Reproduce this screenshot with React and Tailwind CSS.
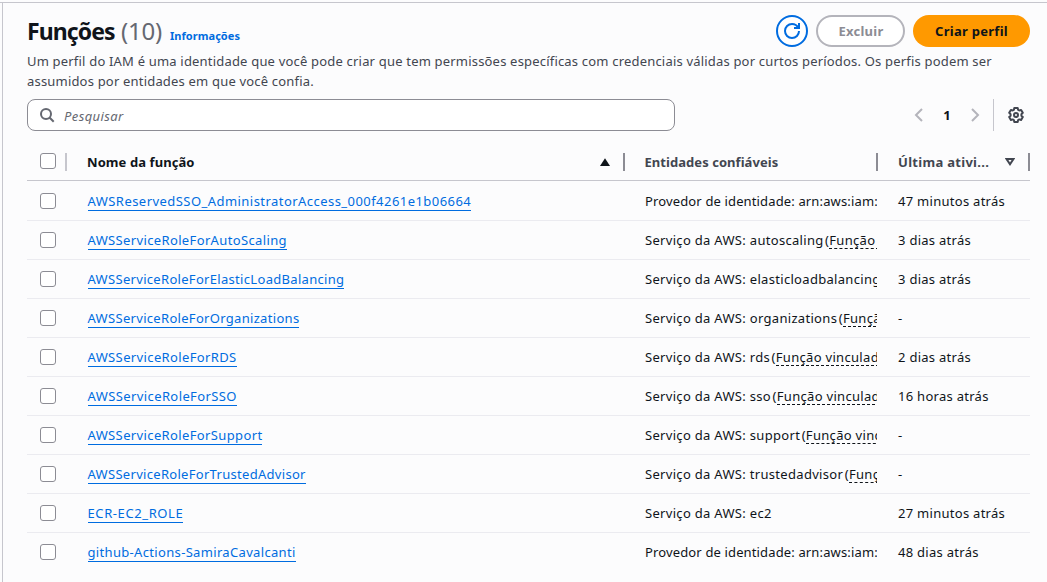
import React from "react";

const roles = [
  { name: "AWSReservedSSO_AdministratorAccess_000f4261e1b06664", track: "tracking-[0.45px]", entity: "Provedor de identidade: arn:aws:iam:", provider: true, activity: "47 minutos atrás" },
  { name: "AWSServiceRoleForAutoScaling", track: "tracking-[0.36px]", entity: "Serviço da AWS: autoscaling", linked: "Função ", activity: "3 dias atrás" },
  { name: "AWSServiceRoleForElasticLoadBalancing", track: "tracking-[0.31px]", entity: "Serviço da AWS: elasticloadbalancing", activity: "3 dias atrás" },
  { name: "AWSServiceRoleForOrganizations", track: "tracking-[0.31px]", entity: "Serviço da AWS: organizations", linked: "Funçã", activity: "-" },
  { name: "AWSServiceRoleForRDS", track: "tracking-[0.37px]", entity: "Serviço da AWS: rds", linked: "Função vinculad", activity: "2 dias atrás" },
  { name: "AWSServiceRoleForSSO", track: "tracking-[0.4px]", entity: "Serviço da AWS: sso", linked: "Função vinculad", activity: "16 horas atrás" },
  { name: "AWSServiceRoleForSupport", track: "tracking-[0.37px]", entity: "Serviço da AWS: support", linked: "Função vinc", activity: "-" },
  { name: "AWSServiceRoleForTrustedAdvisor", track: "tracking-[0.3px]", entity: "Serviço da AWS: trustedadvisor", linked: "Funç", activity: "-" },
  { name: "ECR-EC2_ROLE", track: "tracking-[0.6px]", entity: "Serviço da AWS: ec2", activity: "27 minutos atrás" },
  { name: "github-Actions-SamiraCavalcanti", track: "tracking-[0.33px]", entity: "Provedor de identidade: arn:aws:iam:", provider: true, activity: "48 dias atrás" },
];

function Checkbox() {
  return <span role="checkbox" aria-checked="false" className="block size-4 rounded-[3px] border border-[#8c8c94] bg-white" />;
}

function Header() {
  return (
    <header className="flex h-8 items-start justify-between">
      <div className="flex items-baseline whitespace-nowrap leading-8">
        <h1 className="w-[94px] text-[23px] font-bold tracking-[-0.9px] text-[#0f141a]">Funções</h1>
        <span className="w-[49px] text-[24px] tracking-[-0.2px] text-[#656871]">(10)</span>
        <a className="text-[11px] font-bold tracking-[0.05px] text-[#006ce0]">Informações</a>
      </div>
      <div className="flex gap-2">
        <button aria-label="Atualizar" className="flex size-8 items-center justify-center rounded-full border-2 border-[#006ce0] bg-white text-[#006ce0]">
          <svg viewBox="0 0 16 16" className="size-4" fill="none" stroke="currentColor" strokeWidth="2">
            <path d="M15 8c0 3.87-3.13 7-7 7s-7-3.13-7-7 3.13-7 7-7c2.79 0 5.2 1.63 6.33 4" />
            <path d="M10 5h5V0" />
          </svg>
        </button>
        <button className="h-8 w-[89px] rounded-full border-2 border-[#b4b4bb] bg-white pl-px pt-0.5 text-[13px] font-bold tracking-[0.25px] text-[#8c8c94]">Excluir</button>
        <button className="h-8 w-[117px] rounded-full bg-[#ff9900] pt-0.5 text-[13px] font-bold tracking-[0.28px] text-[#0f141a]">Criar perfil</button>
      </div>
    </header>
  );
}

function Toolbar() {
  return (
    <div className="mt-2 flex h-8 items-center justify-between">
      <div className="flex h-8 w-[648px] items-center rounded-lg border border-[#8c8c94] bg-white pl-[11px]">
        <svg viewBox="0 0 16 16" className="size-4" fill="none" stroke="#656871" strokeWidth="2">
          <circle cx="7" cy="7" r="5" />
          <path d="m10.500 10.500 4.200 4.200" />
        </svg>
        <span className="pl-[9px] pt-[3px] text-[13px] italic tracking-[0.4px] text-[#656871]">Pesquisar</span>
      </div>
      <div className="flex h-8 items-center pr-1.5">
        <svg viewBox="0 0 16 16" className="size-4" fill="none" stroke="#b4b4bb" strokeWidth="2"><path d="M11 2 5 8l6 6" /></svg>
        <span className="w-10 pt-px text-center text-[13px] font-bold text-[#0f141a]">1</span>
        <svg viewBox="0 0 16 16" className="size-4" fill="none" stroke="#b4b4bb" strokeWidth="2"><path d="m5 2 6 6-6 6" /></svg>
        <span className="ml-[10px] h-8 w-px bg-[#c6c6cd]" />
        <svg viewBox="0 0 16 16" className="ml-[14px] size-4" fill="none" stroke="#424650" strokeWidth="2" strokeLinejoin="round">
          <path d="M6.3 1h3.4l.4 1.8 1.2.7 1.8-.6 1.7 2.9L13.4 7.200v1.600l1.400 1.300-1.700 2.900-1.800-.6-1.200.7-.4 1.900H6.300l-.4-1.900-1.200-.7-1.800.6-1.700-2.900 1.400-1.300V7.200L1.200 5.800l1.700-2.900 1.800.6 1.200-.7z" />
          <circle cx="8" cy="8" r="2" />
        </svg>
      </div>
    </div>
  );
}

const columns = "grid grid-cols-[40px_558px_253px_152px]";

function TableHead() {
  return (
    <div className={`${columns} mt-[14px] h-9 border-b border-[#c6c6cd] pt-2 text-[13px] font-bold leading-[18px] text-[#424650]`}>
      <div className="flex h-[18px] justify-between pl-[13px]">
        <Checkbox />
        <span className="h-[18px] w-[2px] bg-[#c6c6cd]" />
      </div>
      <div className="flex h-[18px] items-center justify-between pl-5 text-[#0f141a]">
        <span className="tracking-[0.08px]">Nome da função</span>
        <span className="flex h-[18px] items-center gap-[13px]">
          <svg viewBox="0 0 10 8" className="h-2 w-[10px]" fill="#0f141a"><path d="M5 .2 10 8H0z" /></svg>
          <span className="h-[18px] w-[2px] bg-[#8c8c94]" />
        </span>
      </div>
      <div className="flex h-[18px] items-center justify-between pl-[19.5px]">
        <span className="tracking-[0.05px]">Entidades confiáveis</span>
        <span className="h-[18px] w-[2px] bg-[#8c8c94]" />
      </div>
      <div className="flex h-[18px] items-center justify-between pl-5">
        <span className="tracking-[0.3px]">Última ativi...</span>
        <span className="flex h-[18px] items-center gap-[13px]">
          <svg viewBox="0 0 10 8" className="h-2 w-[10px]" fill="none" stroke="#424650" strokeWidth="2"><path d="M1.600 1h6.800L5 6.200z" /></svg>
          <span className="h-[18px] w-[2px] bg-[#8c8c94]" />
        </span>
      </div>
    </div>
  );
}

function Row({ role }) {
  return (
    <div className={`${columns} h-[39px] items-start border-b border-[#ebebf0] pt-[10px] text-[13px] leading-[18px] text-[#0f141a] last:border-transparent`}>
      <div className="pl-[13px] pt-px"><Checkbox /></div>
      <div className="pl-[20.5px]">
        <a className={`${role.track} inline-block h-[19px] border-b border-[#006ce0] leading-[18px] text-[#006ce0]`}>{role.name}</a>
      </div>
      <div className={`mr-px h-6 overflow-hidden whitespace-nowrap pl-5 ${role.provider ? "tracking-[0.14px]" : "tracking-[0.31px]"}`}>
        {role.entity}
        {role.linked && (
          <span className="ml-[1.5px]">
            (<span className="inline-block h-[18px] whitespace-pre border-b border-dashed border-[#0f141a]">{role.linked}</span>
          </span>
        )}
      </div>
      <div className="pl-5 tracking-[0.28px]">{role.activity}</div>
    </div>
  );
}

export default function App() {
  return (
    <div className="h-[582px] w-[1047px] overflow-hidden bg-[#fcfcfd] pt-[2px] font-['Noto_Sans',sans-serif]">
      <main className="h-[580px] border-t border-[#c6c6cd] pl-[2px]">
        <div className="h-full border-l border-[#c6c6cd] pl-6 pr-[17px] pt-3">
          <Header />
          <p className="mt-1 w-[985px] text-[13px] leading-5 tracking-[0.19px] text-[#424650]">
            Um perfil do IAM é uma identidade que você pode criar que tem permissões específicas com credenciais válidas por curtos períodos. Os perfis podem ser<br />
            assumidos por entidades em que você confia.
          </p>
          <Toolbar />
          <TableHead />
          <div className="pt-px">
            {roles.map((role) => <Row key={role.name} role={role} />)}
          </div>
        </div>
      </main>
    </div>
  );
}
